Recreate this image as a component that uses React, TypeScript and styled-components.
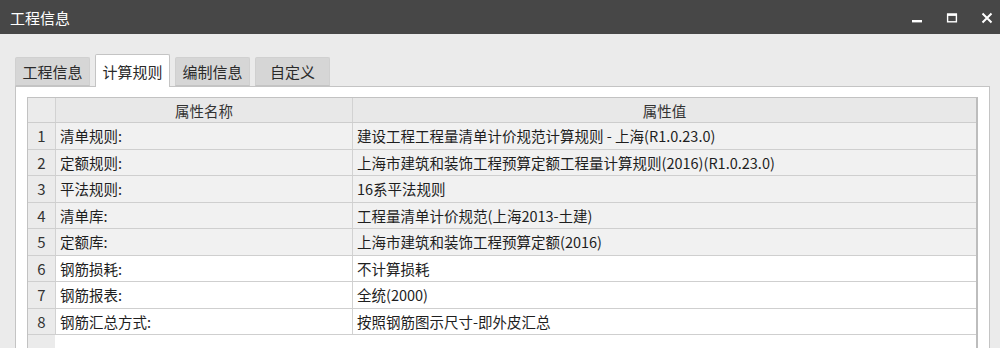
import React, { FunctionComponent, useState } from 'react'
import styled, { createGlobalStyle } from 'styled-components'

interface Rule {
    name: string
    value: string
    readOnly: boolean
}

const rules: Rule[] = [
    { name: '清单规则:', value: '建设工程工程量清单计价规范计算规则 - 上海(R1.0.23.0)', readOnly: true },
    { name: '定额规则:', value: '上海市建筑和装饰工程预算定额工程量计算规则(2016)(R1.0.23.0)', readOnly: true },
    { name: '平法规则:', value: '16系平法规则', readOnly: true },
    { name: '清单库:', value: '工程量清单计价规范(上海2013-土建)', readOnly: true },
    { name: '定额库:', value: '上海市建筑和装饰工程预算定额(2016)', readOnly: true },
    { name: '钢筋损耗:', value: '不计算损耗', readOnly: false },
    { name: '钢筋报表:', value: '全统(2000)', readOnly: false },
    { name: '钢筋汇总方式:', value: '按照钢筋图示尺寸-即外皮汇总', readOnly: false },
]

const tabs = ['工程信息', '计算规则', '编制信息', '自定义']

const App: FunctionComponent = () => {

    const [activeTab, setActiveTab] = useState<number>(1)

    return (
        <Window>
            <GlobalStyle />
            <TitleBar>
                <span>工程信息</span>
                <Controls>
                    <ControlButton aria-label="minimize">
                        <svg width="12" height="12" viewBox="0 0 12 12">
                            <rect x="1" y="8" width="10" height="2.4" fill="#fff" />
                        </svg>
                    </ControlButton>
                    <ControlButton aria-label="maximize">
                        <svg width="12" height="12" viewBox="0 0 12 12">
                            <rect x="1.6" y="2.2" width="8.8" height="7.6" fill="none" stroke="#fff" strokeWidth="1.4" />
                            <rect x="1" y="1.5" width="10" height="2.4" fill="#fff" />
                        </svg>
                    </ControlButton>
                    <ControlButton aria-label="close">
                        <svg width="12" height="12" viewBox="0 0 12 12">
                            <path d="M1.5 1.5 L10.5 10.5 M10.5 1.5 L1.5 10.5" stroke="#fff" strokeWidth="2" />
                        </svg>
                    </ControlButton>
                </Controls>
            </TitleBar>
            <Body>
                <TabBar>
                    {tabs.map((t, i) =>
                        <Tab key={t} active={i === activeTab} onClick={() => setActiveTab(i)}>
                            {t}
                        </Tab>
                    )}
                </TabBar>
                <Panel>
                    <Table>
                        <HeaderRow>
                            <NumCell />
                            <HeaderCell>属性名称</HeaderCell>
                            <HeaderCell>属性值</HeaderCell>
                        </HeaderRow>
                        {rules.map((r, i) =>
                            <Row key={r.name} shaded={r.readOnly}>
                                <NumCell>{i + 1}</NumCell>
                                <Cell>{r.name}</Cell>
                                <Cell>{r.value}</Cell>
                            </Row>
                        )}
                        <FillerRow>
                            <NumCell />
                            <div />
                            <div />
                        </FillerRow>
                    </Table>
                </Panel>
            </Body>
        </Window>
    )
}

const GlobalStyle = createGlobalStyle`
    html, body {
        margin: 0;
        padding: 0;
        background: #ebebeb;
    }
    body {
        font-family: "Noto Sans CJK SC", "Noto Sans", sans-serif;
        color: #1e1e1e;
    }
`

const Window = styled.div`
    width: 1000px;
    height: 348px;
    display: flex;
    flex-direction: column;
    overflow: hidden;
    background: #ebebeb;
`

const TitleBar = styled.div`
    height: 34px;
    flex: none;
    display: flex;
    align-items: center;
    justify-content: space-between;
    padding-left: 10px;
    background: #474747;
    color: #fff;
    font-size: 15px;
`

const Controls = styled.div`
    display: flex;
    align-items: center;
    gap: 21px;
    padding-right: 6px;
`

const ControlButton = styled.div`
    width: 14px;
    height: 14px;
    display: flex;
    align-items: center;
    justify-content: center;
    margin-top: 1px;
`

const Body = styled.div`
    flex: 1;
    display: flex;
    flex-direction: column;
    padding: 20px 10px 0 15px;
    min-height: 0;
`

const TabBar = styled.div`
    display: flex;
    align-items: flex-end;
    gap: 5px;
    height: 32px;
    flex: none;
    position: relative;
    z-index: 1;
`

const Tab = styled.div<{ active: boolean }>`
    width: 75px;
    box-sizing: border-box;
    display: flex;
    align-items: center;
    justify-content: center;
    font-size: 15px;
    color: #2a2a2a;
    cursor: pointer;
    height: ${p => p.active ? '33px' : '29px'};
    margin-bottom: ${p => p.active ? '-1px' : '0'};
    background: ${p => p.active ? '#fff' : '#d6d6d6'};
    border: 1px solid ${p => p.active ? '#c4c4c4' : '#d0d0d0'};
    border-bottom: ${p => p.active ? 'none' : '1px solid #c4c4c4'};
    border-radius: 2px 2px 0 0;
    padding-top: ${p => p.active ? '1px' : '0'};
`

const Panel = styled.div`
    flex: 1;
    min-height: 0;
    display: flex;
    flex-direction: column;
    background: #fff;
    border: 1px solid #c4c4c4;
    border-bottom: none;
    padding: 10px 11px 0 11px;
`

const Table = styled.div`
    flex: 1;
    display: flex;
    flex-direction: column;
    border: 1px solid #c2c2c2;
    border-right: 2px solid #bdbdbd;
    border-bottom: none;
    font-size: 14.5px;
`

const gridColumns = `
    display: grid;
    grid-template-columns: 27px 297px 1fr;
`

const HeaderRow = styled.div`
    ${gridColumns}
    height: 25px;
    box-sizing: border-box;
    background: #e8e8e8;
    border-bottom: 1px solid #cdcdcd;
    color: #333;
`

const HeaderCell = styled.div`
    display: flex;
    align-items: center;
    justify-content: center;
    border-left: 1px solid #d2d2d2;
`

const Row = styled.div<{ shaded: boolean }>`
    ${gridColumns}
    height: 26.5px;
    box-sizing: border-box;
    border-bottom: 1px solid #cfcfcf;
    background: ${p => p.shaded ? '#f1f1f1' : '#fff'};
`

const FillerRow = styled.div`
    ${gridColumns}
    flex: 1;
    background: #fff;
`

const NumCell = styled.div`
    display: flex;
    align-items: center;
    justify-content: center;
    background: #ebebeb;
    color: #333;
    font-size: 15px;
`

const Cell = styled.div`
    display: flex;
    align-items: center;
    padding-left: 4px;
    border-left: 1px solid #d2d2d2;
    white-space: nowrap;
    overflow: hidden;
`

export default App
